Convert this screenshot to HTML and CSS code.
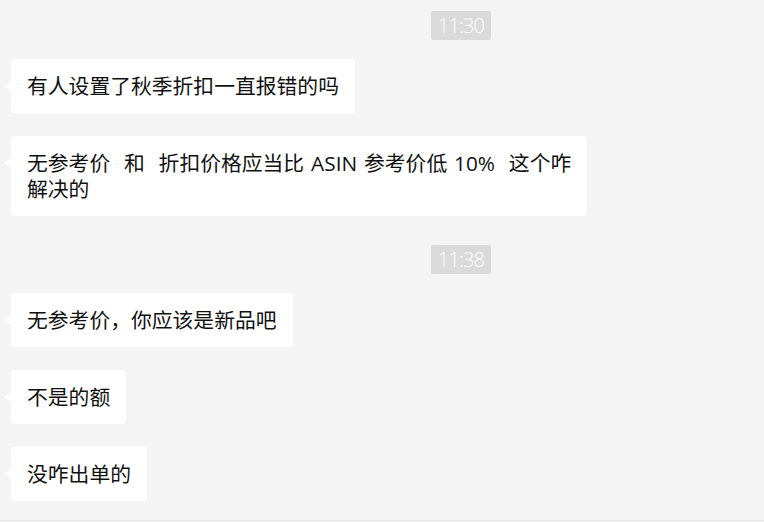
FILE: index.html
```html
<!DOCTYPE html>
<html lang="zh-CN">
<head>
    <meta charset="UTF-8">
    <meta name="viewport" content="width=device-width, initial-scale=1.0">
    <title>聊天记录</title>
    <link rel="stylesheet" href="styles.css">
</head>
<body>
    <div class="chat">
        <div class="time-row"><span class="time">11:30</span></div>
        <div class="msg"><div class="bubble">有人设置了秋季折扣一直报错的吗</div></div>
        <div class="msg"><div class="bubble">无参考价&nbsp;&nbsp;和&nbsp;&nbsp;折扣价格应当比 ASIN 参考价低 10%&nbsp;&nbsp;这个咋<br>解决的</div></div>

        <div class="time-row later"><span class="time">11:38</span></div>
        <div class="msg"><div class="bubble">无参考价，你应该是新品吧</div></div>
        <div class="msg"><div class="bubble">不是的额</div></div>
        <div class="msg"><div class="bubble">没咋出单的</div></div>
    </div>
</body>
</html>
```

FILE: styles.css
```css
html, body {
    margin: 0;
    padding: 0;
    height: 100%;
    overflow: hidden;
}
body {
    background: #f4f4f4;
    font-family: "Open Sans", "Noto Sans CJK SC", sans-serif;
    color: #111;
}
.chat {
    height: 521px;
    border-bottom: 1px solid #e6e6e6;
    padding-top: 11px;
    box-sizing: border-box;
}
.time-row {
    display: flex;
    padding-left: 431px;
    margin-bottom: 19px;
}
.time-row.later {
    margin-top: 29px;
}
.time {
    width: 60px;
    height: 29px;
    line-height: 29px;
    text-align: center;
    background: #dadada;
    color: #fff;
    border-radius: 2px;
    font-weight: 300;
    font-size: 20px;
    letter-spacing: -0.8px;
}
.msg {
    display: flex;
    padding-left: 11px;
    margin-bottom: 23px;
}
.bubble {
    position: relative;
    background: #fff;
    border-radius: 4px;
    padding: 14px 16px;
    font-size: 20.8px;
    line-height: 26px;
    word-spacing: 1.5px;
}
.bubble::before {
    content: "";
    position: absolute;
    left: -7px;
    top: 22px;
    border-top: 5px solid transparent;
    border-bottom: 5px solid transparent;
    border-right: 7px solid #fff;
}
```
